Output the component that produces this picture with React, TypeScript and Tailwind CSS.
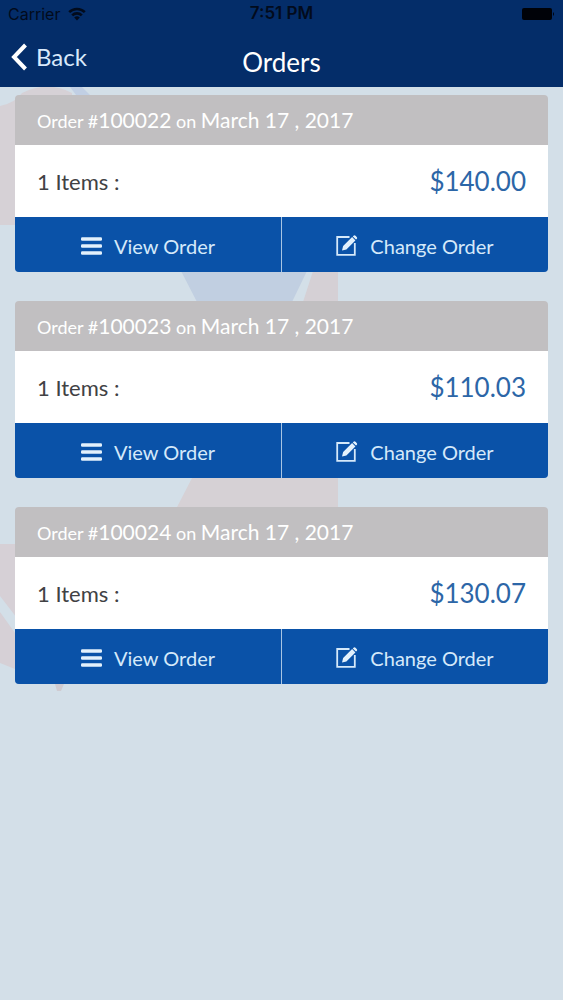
import React, { FC } from "react";

interface Order {
  id: string;
  date: string;
  items: number;
  total: string;
}

const orders: Order[] = [
  { id: "100022", date: "March 17 , 2017", items: 1, total: "$140.00" },
  { id: "100023", date: "March 17 , 2017", items: 1, total: "$110.03" },
  { id: "100024", date: "March 17 , 2017", items: 1, total: "$130.07" },
];

const WifiIcon: FC = () => (
  <svg width="18" height="14" viewBox="0 0 18 14" aria-hidden="true">
    <g fill="none" stroke="#020b1c" strokeWidth="2.6">
      <path d="M1.2 5.2a11 11 0 0 1 15.6 0" />
      <path d="M4.2 8.4a6.8 6.8 0 0 1 9.6 0" />
    </g>
    <path d="M9 13.4 6.2 10.6a4 4 0 0 1 5.6 0Z" fill="#020b1c" />
  </svg>
);

const BatteryIcon: FC = () => (
  <svg width="34" height="14" viewBox="0 0 34 14" aria-hidden="true">
    <rect x="1" y="1" width="30" height="12" rx="2" fill="#000208" />
    <path d="M32 5q2 2 0 4Z" fill="#000208" />
  </svg>
);

const BackIcon: FC = () => (
  <svg width="17" height="28" viewBox="0 0 17 28" aria-hidden="true">
    <path
      d="M14.5 2 3 14l11.5 12"
      fill="none"
      stroke="#fff"
      strokeWidth="4"
    />
  </svg>
);

const ListIcon: FC = () => (
  <svg width="21" height="18" viewBox="0 0 21 18" aria-hidden="true">
    <g fill="#e3f1fc">
      <rect y="0.3" width="21" height="3.4" rx="1.2" />
      <rect y="7.3" width="21" height="3.4" rx="1.2" />
      <rect y="14.3" width="21" height="3.4" rx="1.2" />
    </g>
  </svg>
);

const EditIcon: FC = () => (
  <svg width="22" height="21" viewBox="0 0 22 21" aria-hidden="true">
    <path
      d="M13.5 2H1.2v17.8h17.6V8"
      fill="none"
      stroke="#d5e9fa"
      strokeWidth="1.8"
    />
    <path d="m6 15.4 1.1-4.3 9-9 3.3 3.3-9 9Z" fill="#e3f1fc" />
    <path d="m16.8 1.4.7-.7q1.1-.9 2 0l1.2 1.2q.9 1 0 2l-.7.7Z" fill="#e3f1fc" />
  </svg>
);

const Backdrop: FC = () => (
  <svg
    className="absolute left-0 top-0 h-[720px] w-[563px]"
    viewBox="0 0 563 720"
    aria-hidden="true"
  >
    <path d="M0 106Q15 103 22 93q26-13 50 0v132H0Z" fill="#d6d1d6" />
    <path d="M70 87h12l8 8H76Z" fill="#c1cfe4" />
    <path d="M181 271h126l-15 31h-95Z" fill="#c1cfe1" />
    <path d="M313 271h25v31h-35Z" fill="#d5d0d5" />
    <path d="M192 478h146v31H176Z" fill="#d6d1d5" />
    <path d="M0 544h20v78L0 596Z" fill="#d6d0d6" />
    <path d="M0 612 20 640v31L0 663Z" fill="#d6d0d6" />
    <path d="M55 684h9l-3 7h-4Z" fill="#cfcbd1" />
  </svg>
);

const OrderCard: FC<{ order: Order }> = ({ order }) => {
  return (
    <article className="w-full overflow-hidden rounded">
      <h2 className="flex h-[50px] items-center bg-[#c1bfc1] px-[22px] text-lg text-white">
        <span className="whitespace-nowrap">
          Order #<span className="text-[21px]">{order.id}</span> on{" "}
          <span className="text-[21px]">{order.date}</span>
        </span>
      </h2>
      <div className="flex h-[72px] items-center justify-between bg-white px-[22px]">
        <p className="text-[22px] text-[#414144]">{order.items} Items :</p>
        <p className="text-[26px] text-[#2c66a7]">{order.total}</p>
      </div>
      <div className="grid h-[55px] grid-cols-2 gap-px bg-[#a9c5e3] text-xl text-[#d5e9fa]">
        <button
          type="button"
          className="flex items-center justify-center gap-3 bg-[#0a52a8] pt-0.5"
        >
          <ListIcon />
          View Order
        </button>
        <button
          type="button"
          className="flex items-center justify-center gap-3 bg-[#0a52a8] pt-0.5"
        >
          <EditIcon />
          Change Order
        </button>
      </div>
    </article>
  );
};

const App: FC = () => {
  return (
    <div className="relative min-h-screen w-full overflow-hidden bg-[#d3dfe8] font-['Lato',sans-serif]">
      <Backdrop />
      <header className="relative h-[87px] bg-[#042d69]">
        <div className="grid h-7 grid-cols-3 items-center px-2 font-['Inter',sans-serif] text-base text-[#020b1c]">
          <div className="flex items-center gap-2">
            <span>Carrier</span>
            <WifiIcon />
          </div>
          <span className="text-center text-[17px] font-semibold">7:51 PM</span>
          <div className="flex justify-end">
            <BatteryIcon />
          </div>
        </div>
        <nav className="grid h-[59px] grid-cols-3 px-[11px] text-white">
          <button
            type="button"
            className="flex h-[58px] items-center gap-2 text-2xl text-[#d9e9fb]"
          >
            <BackIcon />
            Back
          </button>
          <h1 className="pt-4 text-center text-[26px] leading-9">Orders</h1>
        </nav>
      </header>
      <main className="relative flex flex-col gap-[29px] px-[15px] pt-2 pb-8">
        {orders.map((order) => (
          <OrderCard key={order.id} order={order} />
        ))}
      </main>
    </div>
  );
};

export default App;
